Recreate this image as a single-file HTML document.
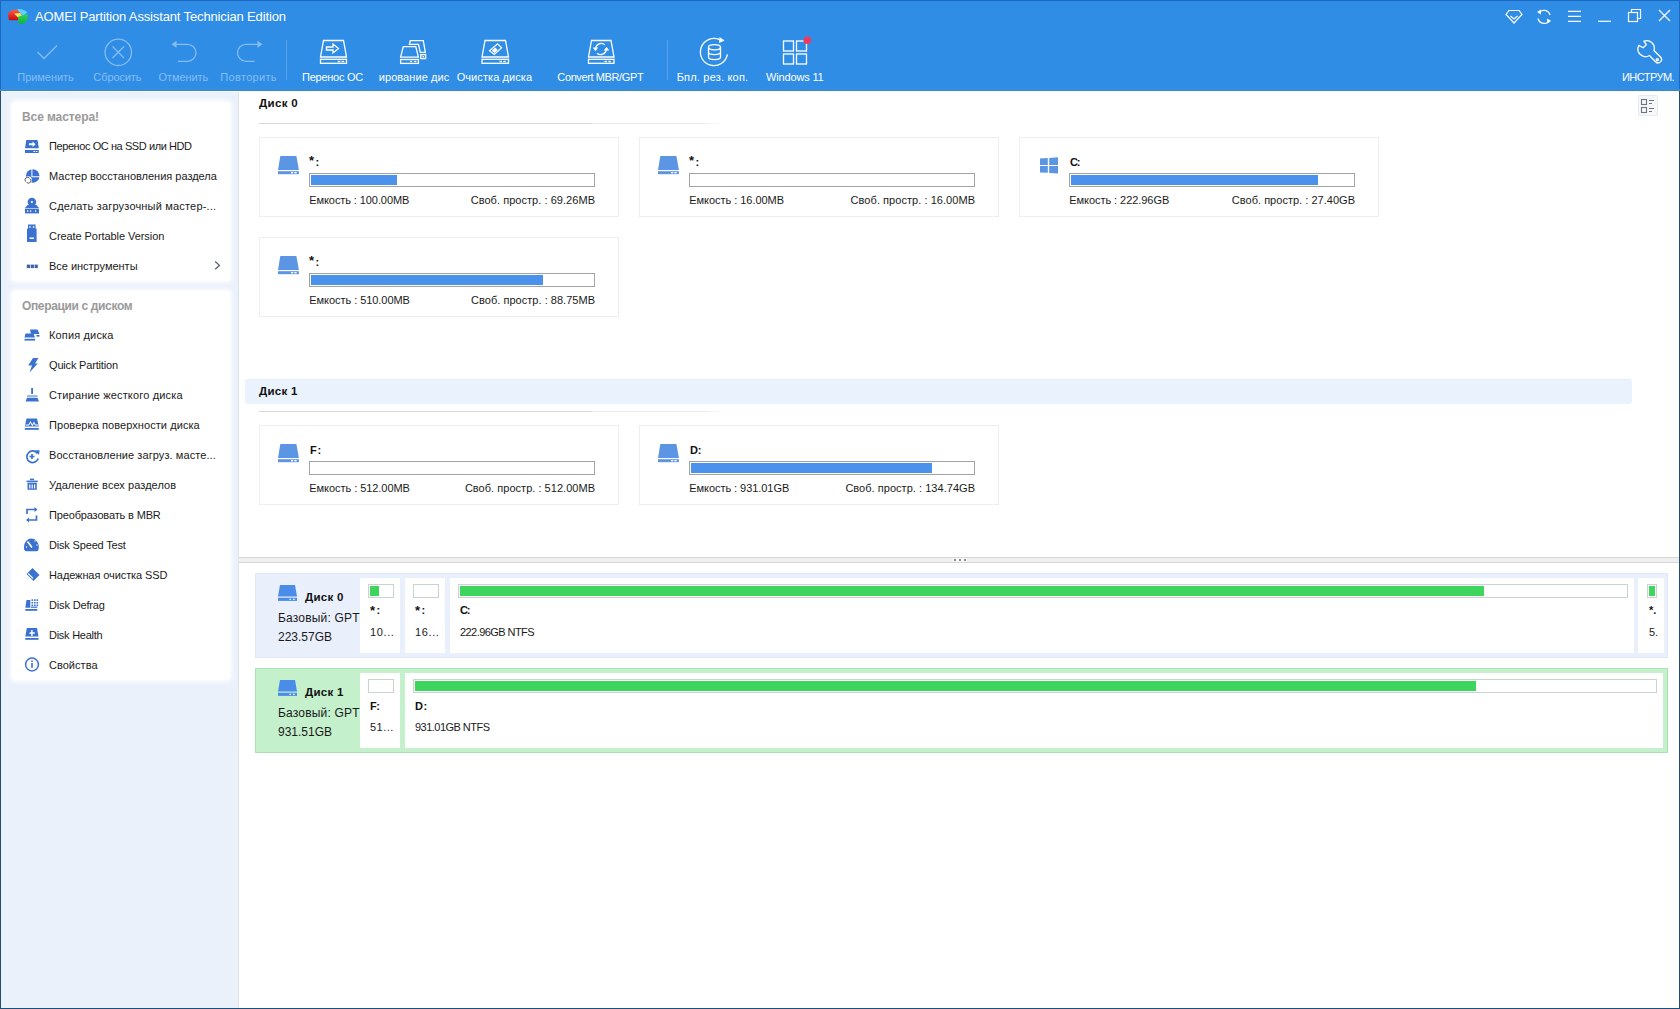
<!DOCTYPE html>
<html><head><meta charset="utf-8">
<style>
*{box-sizing:border-box;margin:0;padding:0}
html,body{width:1680px;height:1009px;overflow:hidden;background:#fff;font-family:"Liberation Sans",sans-serif;color:#1a1a1a}
.t{position:absolute;line-height:1;white-space:nowrap}
.r{position:absolute}
svg{position:absolute;overflow:visible}
</style></head><body>
<div class="r" style="left:0px;top:0px;width:1680px;height:90px;background:#2f8de6;"></div><div class="r" style="left:0px;top:0px;width:1680px;height:1px;background:#1c68c0;"></div><div class="r" style="left:0px;top:0px;width:1px;height:90px;background:#1c68c0;"></div><div class="r" style="left:1679px;top:0px;width:1px;height:90px;background:#1c68c0;"></div><div class="r" style="left:0px;top:89px;width:1680px;height:1px;background:#3a8ddc;"></div><svg style="left:8px;top:8px" width="21" height="17" viewBox="0 0 21 17">
<defs>
<linearGradient id="lr" x1="0" y1="0" x2="0" y2="1"><stop offset="0" stop-color="#ff5a4a"/><stop offset="1" stop-color="#c80a0a"/></linearGradient>
<linearGradient id="lgn" x1="0" y1="0" x2="0" y2="1"><stop offset="0" stop-color="#2fd35a"/><stop offset="1" stop-color="#12b03c"/></linearGradient>
</defs>
<path d="M9.5 1 Q15.5 0.5 19.5 4.5 L15 7.5 Q13 5.5 10 5.5 Z" fill="#5fd0ff"/>
<path d="M0.5 4.5 Q4 1.5 9 1.5 L13.5 6.5 L10.5 12 Q6 12.5 1 12 Q-0.5 8 0.5 4.5 Z" fill="url(#lr)"/>
<path d="M6 5.5 L12 5 L14.5 8 L10.5 10 Z" fill="#e6e860"/>
<path d="M10.5 8.5 L19.5 6 Q20.5 12 17 14.5 Q14 16.5 11 16 L10 11 Z" fill="url(#lgn)"/>
</svg><div class="t" style="left:35px;top:10.00px;font-size:13px;font-weight:400;color:#fff;letter-spacing:-0.14px;">AOMEI Partition Assistant Technician Edition</div><div class="t" style="left:45.5px;top:71.69px;font-size:11px;font-weight:400;color:#86bdf2;letter-spacing:-0.062px;transform:translateX(-50%)">Применить</div><div class="t" style="left:117.4px;top:71.69px;font-size:11px;font-weight:400;color:#86bdf2;letter-spacing:-0.1px;transform:translateX(-50%)">Сбросить</div><div class="t" style="left:183.3px;top:71.69px;font-size:11px;font-weight:400;color:#86bdf2;letter-spacing:-0.071px;transform:translateX(-50%)">Отменить</div><div class="t" style="left:248.6px;top:71.69px;font-size:11px;font-weight:400;color:#86bdf2;letter-spacing:0.312px;transform:translateX(-50%)">Повторить</div><div class="t" style="left:332.5px;top:71.69px;font-size:11px;font-weight:400;color:#fff;letter-spacing:-0.256px;transform:translateX(-50%)">Перенос ОС</div><div class="t" style="left:414px;top:71.69px;font-size:11px;font-weight:400;color:#fff;letter-spacing:0.073px;transform:translateX(-50%)">ирование дис</div><div class="t" style="left:494.4px;top:71.69px;font-size:11px;font-weight:400;color:#fff;letter-spacing:0.083px;transform:translateX(-50%)">Очистка диска</div><div class="t" style="left:600.3px;top:71.69px;font-size:11px;font-weight:400;color:#fff;letter-spacing:-0.386px;transform:translateX(-50%)">Convert MBR/GPT</div><div class="t" style="left:712.5px;top:71.69px;font-size:11px;font-weight:400;color:#fff;letter-spacing:0.2px;transform:translateX(-50%)">Бпл. рез. коп.</div><div class="t" style="left:794.8px;top:71.69px;font-size:11px;font-weight:400;color:#fff;letter-spacing:-0.156px;transform:translateX(-50%)">Windows 11</div><div class="t" style="left:1648px;top:71.69px;font-size:11px;font-weight:400;color:#fff;letter-spacing:-0.543px;transform:translateX(-50%)">ИНСТРУМ.</div><div class="r" style="left:286px;top:40px;width:1px;height:40px;background:#5aa3ea;"></div><div class="r" style="left:667px;top:40px;width:1px;height:40px;background:#5aa3ea;"></div><svg style="left:0px;top:0px" width="1680" height="90" viewBox="0 0 1680 90">
<g fill="none" stroke="#86bdf2" stroke-width="1.3">
 <path d="M37.5 52 L44 58.5 L57 45.5"/>
 <circle cx="118.3" cy="52.3" r="13.2"/>
 <path d="M112.5 46.5 L124 58 M124 46.5 L112.5 58"/>
 <path d="M174 44.3 H187.5 A8.5 8.5 0 0 1 187.5 61.3 H178"/>
 <path d="M260 44.3 H246 A8.5 8.5 0 0 0 246 61.3 H254.5"/>
</g>
<path d="M171.5 44.3 L176.5 40.8 L176.5 47.8 Z" fill="#86bdf2"/>
<path d="M262.5 44.3 L257.5 40.8 L257.5 47.8 Z" fill="#86bdf2"/>
<g fill="none" stroke="#fff" stroke-width="1.3">
 <path d="M323.5 40.5 H343.5 L346.5 57 H320.5 Z"/>
 <rect x="320.5" y="59.3" width="26" height="4"/>
 <path d="M326.5 47 H333 V44 L338.5 48.5 L333 53 V50 H326.5 Z"/>
 <path d="M410.3 40.6 H423.3 L425.3 52.4 H420.3 L418.5 44.3 H409.4 Z"/>
 <path d="M403.3 46.6 H415.8 L418.4 57.2 H400.6 Z"/>
 <rect x="400.6" y="59.5" width="17.8" height="3.9"/>
 <rect x="420.8" y="54.6" width="4.8" height="4"/>
 <path d="M485 40.5 H505.5 L508.5 57 H482 Z"/>
 <rect x="482" y="59.3" width="26.5" height="4"/>
 <path d="M497.6 43.8 L501.6 47.8 L494.3 54.5 L489.5 50.8 Z" stroke-width="1.2"/>
 <path d="M591.5 40.5 H611 L614 57 H588.5 Z"/>
 <rect x="588.5" y="59.3" width="25.5" height="4"/>
 <path d="M595.6 48.5 A5.6 5.6 0 0 1 604.8 44.8 M606.3 49.5 A5.6 5.6 0 0 1 597 53.2"/>
 <path d="M727.4 54.4 A13.6 13.6 0 1 1 719.5 39.6"/>
 <ellipse cx="714.5" cy="47.3" rx="6" ry="2.6"/>
 <path d="M708.5 47.3 V57 A6 2.6 0 0 0 720.5 57 V47.3 M708.5 52 A6 2.6 0 0 0 720.5 52"/>
 <rect x="783.5" y="41" width="10" height="10"/>
 <rect x="796.5" y="41" width="10" height="10"/>
 <rect x="783.5" y="54" width="10" height="10"/>
 <rect x="796.5" y="54" width="10" height="10"/>
 <path d="M1638.8 45.5 A7.6 7.6 0 0 0 1649.5 55.5 L1655.5 61.8 A3.4 3.4 0 0 0 1660.5 57 L1654 50.5 A7.6 7.6 0 0 0 1644 41.2 L1646.3 44.6 L1643.2 47.8 Z"/>
 <circle cx="1657.3" cy="59.8" r="1.1"/>
</g>
<path d="M592.8 47.6 L598.2 47.6 L595.5 51.2 Z M603.8 50.4 L609.2 50.4 L606.5 46.8 Z M491.8 50.6 L495.3 47.4 L497.8 49.9 L494.3 53.1 Z" fill="#fff"/>
<path d="M719.5 37 L724.5 40.6 L719 43 Z" fill="#fff"/>
<g fill="#fff"><rect x="337.8" y="60.8" width="2.5" height="1.3"/><rect x="341.6" y="60.8" width="2.5" height="1.3"/>
<rect x="410.2" y="60.8" width="2" height="1.3"/><rect x="414.3" y="60.8" width="2" height="1.3"/>
<rect x="499.5" y="60.8" width="2.5" height="1.3"/><rect x="503.3" y="60.8" width="2.5" height="1.3"/>
<rect x="604.5" y="60.8" width="2.5" height="1.3"/><rect x="608.3" y="60.8" width="2.5" height="1.3"/>
<rect x="422.5" y="56" width="1.5" height="1.3"/></g>
<circle cx="807.3" cy="40.3" r="3.8" fill="#f0395a"/>
<g fill="none" stroke="#fff" stroke-width="1.2">
 <path d="M1509 10.5 H1519 L1522 14.5 L1514 23 L1506 14.5 Z M1510.5 16 L1514 19 L1517.5 16"/>
 <path d="M1538.5 13 A6.5 6.5 0 0 1 1550 15 M1550 20 A6.5 6.5 0 0 1 1538 18.5"/>
 <path d="M1568 11.3 H1581 M1568 16.3 H1581 M1568 21.3 H1581"/>
 <path d="M1598 21.3 H1611"/>
 <rect x="1628.5" y="12.5" width="9" height="9"/>
 <path d="M1631.5 12.5 V9.5 H1640.5 V18.5 H1637.5"/>
 <path d="M1659 10 L1670 21 M1670 10 L1659 21"/>
</g>
<path d="M1537 12 L1541 9.5 L1541 14.5 Z M1551 21 L1547 23.5 L1547 18.5 Z" fill="#fff"/>
</svg><div class="r" style="left:0px;top:90px;width:238px;height:919px;background:#ebf1fb;"></div><div class="r" style="left:0px;top:90px;width:1px;height:919px;background:#264e72;"></div><div class="r" style="left:238px;top:90px;width:1px;height:919px;background:#dfe4ea;"></div><div class="r" style="left:12px;top:102px;width:218px;height:179px;background:#fff;border-radius:3px;box-shadow:0 0 4px 2px rgba(255,255,255,0.85)"></div><div class="r" style="left:12px;top:291px;width:218px;height:389px;background:#fff;border-radius:3px;box-shadow:0 0 4px 2px rgba(255,255,255,0.85)"></div><div class="t" style="left:22px;top:110.84px;font-size:12px;font-weight:700;color:#9a9a9a;letter-spacing:-0.091px;">Все мастера!</div><div class="t" style="left:22px;top:299.84px;font-size:12px;font-weight:700;color:#9a9a9a;letter-spacing:-0.356px;">Операции с диском</div><div class="t" style="left:49px;top:140.69px;font-size:11px;font-weight:400;color:#1a1a1a;letter-spacing:-0.421px;">Перенос ОС на SSD или HDD</div><div class="t" style="left:49px;top:170.69px;font-size:11px;font-weight:400;color:#1a1a1a;letter-spacing:-0.011px;">Мастер восстановления раздела</div><div class="t" style="left:49px;top:200.69px;font-size:11px;font-weight:400;color:#1a1a1a;letter-spacing:0.183px;">Сделать загрузочный мастер-...</div><div class="t" style="left:49px;top:230.69px;font-size:11px;font-weight:400;color:#1a1a1a;letter-spacing:-0.068px;">Create Portable Version</div><div class="t" style="left:49px;top:260.69px;font-size:11px;font-weight:400;color:#1a1a1a;letter-spacing:-0.021px;">Все инструменты</div><div class="t" style="left:49px;top:329.69px;font-size:11px;font-weight:400;color:#1a1a1a;letter-spacing:0.15px;">Копия диска</div><div class="t" style="left:49px;top:359.69px;font-size:11px;font-weight:400;color:#1a1a1a;letter-spacing:-0.179px;">Quick Partition</div><div class="t" style="left:49px;top:389.69px;font-size:11px;font-weight:400;color:#1a1a1a;letter-spacing:0.159px;">Стирание жесткого диска</div><div class="t" style="left:49px;top:419.69px;font-size:11px;font-weight:400;color:#1a1a1a;letter-spacing:0.072px;">Проверка поверхности диска</div><div class="t" style="left:49px;top:449.69px;font-size:11px;font-weight:400;color:#1a1a1a;letter-spacing:0.077px;">Восстановление загруз. масте...</div><div class="t" style="left:49px;top:479.69px;font-size:11px;font-weight:400;color:#1a1a1a;letter-spacing:0.057px;">Удаление всех разделов</div><div class="t" style="left:49px;top:509.69px;font-size:11px;font-weight:400;color:#1a1a1a;letter-spacing:-0.15px;">Преобразовать в MBR</div><div class="t" style="left:49px;top:539.69px;font-size:11px;font-weight:400;color:#1a1a1a;letter-spacing:-0.171px;">Disk Speed Test</div><div class="t" style="left:49px;top:569.69px;font-size:11px;font-weight:400;color:#1a1a1a;letter-spacing:-0.089px;">Надежная очистка SSD</div><div class="t" style="left:49px;top:599.69px;font-size:11px;font-weight:400;color:#1a1a1a;letter-spacing:-0.16px;">Disk Defrag</div><div class="t" style="left:49px;top:629.69px;font-size:11px;font-weight:400;color:#1a1a1a;letter-spacing:-0.26px;">Disk Health</div><div class="t" style="left:49px;top:659.69px;font-size:11px;font-weight:400;color:#1a1a1a;letter-spacing:0.029px;">Свойства</div><svg style="left:0px;top:0px" width="240" height="700" viewBox="0 0 240 700">
<g fill="#3b72cf">
 <!-- 1 migrate -->
 <path d="M26.3 140 H37.5 L38.8 148.2 H25 Z"/>
 <rect x="25" y="150" width="13.8" height="3"/>
 <!-- 2 pie -->
 <circle cx="32.7" cy="176" r="6.8"/>
 <!-- 3 boot -->
 <circle cx="31.9" cy="202" r="4.3"/>
 <path d="M27.5 205 H36.5 L39 208 H25 Z"/>
 <rect x="25" y="208.6" width="14" height="4.8"/>
 <!-- 4 usb -->
 <rect x="27" y="228.6" width="9.6" height="13.4"/>
 <rect x="28" y="224.5" width="7.6" height="4.6"/>
 <!-- 5 dots -->
 <g fill="#3f62a5"><rect x="26.8" y="264.6" width="3.2" height="3.5"/><rect x="30.7" y="264.6" width="3.2" height="3.5"/><rect x="34.6" y="264.6" width="3.2" height="3.5"/></g>
 <!-- 6 copy -->
 <path d="M30 329.5 H37.5 L39.5 334 H31 Z"/>
 <path d="M25.5 333.5 H33.5 L35 337.5 H24.5 Z"/>
 <rect x="24.5" y="338.8" width="10.5" height="1.8"/>
 <rect x="36.5" y="335" width="3" height="1.6"/>
 <!-- 7 bolt -->
 <path d="M33 358 L38.5 358 L35 363.5 L37.8 363.5 L29.5 372.5 L32 365.5 L28.2 365.5 Z"/>
 <!-- 8 broom -->
 <rect x="31.2" y="388" width="1.8" height="6"/>
 <path d="M27 395.5 H37.5 L37.5 396.5 H27 Z"/>
 <path d="M27 397.8 H37.5 L39 401.5 H25.5 Z"/>
 <!-- 9 surface -->
 <path d="M26.5 418.5 H37 L38.8 426.5 H24.8 Z"/>
 <rect x="24.8" y="428" width="14" height="1.8"/>
 <!-- 11 trash -->
 <rect x="30" y="478.6" width="4" height="1.6"/>
 <rect x="26.5" y="480.6" width="11.2" height="1.6"/>
 <path d="M27.5 482.8 H36.8 V489.8 H27.5 Z"/>
 <!-- 13 speedometer -->
 <path d="M24 547 A7.4 8.5 0 0 1 38.8 547 L38.6 549.5 Q38.2 551.2 36.5 551.2 H26.3 Q24.6 551.2 24.2 549.5 Z"/>
 <!-- 14 eraser -->
 <path d="M32.5 568 L39.5 575 L33.5 581 L26.5 574 Z"/>
 <!-- 15 defrag -->
 <path d="M26.5 600 H30.3 V607.8 H25.3 Z"/>
 <rect x="25.3" y="609" width="12" height="1.8"/>
 <g>
  <rect x="31.5" y="599.3" width="1.6" height="1.6"/><rect x="34" y="599.3" width="1.6" height="1.6"/><rect x="36.5" y="599.3" width="1.6" height="1.6"/>
  <rect x="31.5" y="601.9" width="1.6" height="1.6"/><rect x="34" y="601.9" width="1.6" height="1.6"/><rect x="36.5" y="601.9" width="1.6" height="1.6"/>
  <rect x="31.5" y="604.5" width="1.6" height="1.6"/><rect x="34" y="604.5" width="1.6" height="1.6"/><rect x="36.5" y="604.5" width="1.6" height="1.6"/>
  <rect x="31" y="606.6" width="6.3" height="1.2"/>
 </g>
 <!-- 16 health -->
 <path d="M26.8 628 H37 L38.5 636.5 H25.3 Z"/>
 <rect x="25.3" y="638" width="13.2" height="1.8"/>
</g>
<g fill="#fff">
 <path d="M29 143.2 H32.6 V141.5 L35.6 144.3 L32.6 147 V145.3 H29 Z"/>
 <rect x="33.5" y="151" width="1.5" height="1"/><rect x="35.8" y="151" width="1.5" height="1"/>
 <path d="M32.4 169 V176.3 H40 V177.3 H31.4 V169 Z"/>
 <circle cx="31.9" cy="202" r="1.1"/>
 <rect x="27" y="210.3" width="1.2" height="1.5"/><rect x="30" y="210.3" width="1.2" height="1.5"/><rect x="35" y="210.3" width="1.2" height="1.5"/>
 <rect x="29.2" y="226.2" width="1.5" height="1.5"/><rect x="32.8" y="226.2" width="1.5" height="1.5"/>
 <rect x="29.5" y="237.5" width="4.5" height="1.4"/>
 <path d="M25.5 424.5 L28.5 424.5 L30.5 421 L32.3 424.5 L34 421.5 L35.5 424.5 L38.5 424.5 L38.5 425.5 L35 425.5 L34 423.5 L32.3 426.5 L30.5 423 L29 425.5 L25.5 425.5 Z"/>
 <rect x="29.2" y="484.5" width="1.2" height="4"/><rect x="31.6" y="484.5" width="1.2" height="4"/><rect x="34" y="484.5" width="1.2" height="4"/>
 <circle cx="26.5" cy="547" r="0.7"/><circle cx="35" cy="541" r="0.7"/><circle cx="37" cy="545" r="0.7"/>
 <path d="M30 632.3 H31.2 V630 H32.6 V632.3 H34.8 V633.7 H32.6 V636 H31.2 V633.7 H29 Z"/>
</g>
<g fill="none" stroke="#3b72cf" stroke-width="1.7">
 <path d="M37.5 453.5 A5.8 5.8 0 1 0 38.2 458.5"/>
 <path d="M29.5 456.5 H34.5 M32 454 V459"/>
 <path d="M27 514 V509.5 H36.5 M36.5 515.5 V520 H27"/>
 <circle cx="32" cy="664.5" r="6.4" stroke-width="1.5"/>
</g>
<g fill="#3b72cf">
 <path d="M35 450.2 L39.6 450.2 L39 455 Z"/>
 <path d="M34.5 507 L37.5 509.5 L34.5 512 Z M29 517.5 L26 520 L29 522.5 Z"/>
 <rect x="31.2" y="663" width="1.6" height="4.8"/><rect x="31.2" y="660.5" width="1.6" height="1.5"/>
</g>
<g fill="none" stroke="#fff" stroke-width="1.2">

 <path d="M27.5 541.5 L32 547.5" stroke-width="1.6"/>
 <path d="M28 573.3 L33 578.3"/>
</g>
<circle cx="28" cy="180.2" r="3.9" fill="#fff"/>
<path d="M25.6 181.5 A2.5 2.5 0 0 1 29.5 178.2" fill="none" stroke="#5a5a5a" stroke-width="1"/>
<path d="M30.4 179 A2.5 2.5 0 0 1 26.5 182.2" fill="none" stroke="#5a5a5a" stroke-width="1"/>
</svg><svg style="left:0px;top:0px" width="240" height="700" viewBox="0 0 240 700"><path d="M215.2 261.5 L219.4 265.4 L215.2 269.3" fill="none" stroke="#4d5b6e" stroke-width="1.2"/></svg><div class="r" style="left:239px;top:90px;width:1440px;height:919px;background:#fff;"></div><div class="r" style="left:1679px;top:90px;width:1px;height:919px;background:#264e72;"></div><div class="r" style="left:0px;top:1008px;width:1680px;height:1px;background:#1a5080;"></div><div class="r" style="left:0px;top:90px;width:1680px;height:1px;background:#4a86b2;"></div><div class="r" style="left:1px;top:91px;width:1678px;height:1px;background:#eafafb;"></div><div class="t" style="left:259px;top:98.27px;font-size:11.5px;font-weight:700;color:#111;letter-spacing:0.34px;">Диск 0</div><div class="r" style="left:259px;top:123px;width:333px;height:1px;background:#d9d9d9;"></div><div class="r" style="left:592px;top:123px;width:114px;height:1px;background:#eaeaea;"></div><div class="r" style="left:706px;top:123px;width:14px;height:1px;background:#f5f5f5;"></div><div class="r" style="left:259px;top:411px;width:333px;height:1px;background:#d9d9d9;"></div><div class="r" style="left:592px;top:411px;width:114px;height:1px;background:#eaeaea;"></div><div class="r" style="left:706px;top:411px;width:14px;height:1px;background:#f5f5f5;"></div><div class="r" style="left:259px;top:137px;width:360px;height:80px;background:#fff;border:1px solid #eeeeee"></div><svg style="left:278px;top:156px" width="22" height="19" viewBox="0 0 22 19"><path d="M2.3 0 H18.4 L20.9 14 H0 Z" fill="#5b95e3"/><rect x="0" y="15.2" width="20.9" height="3" fill="#5b95e3"/><rect x="13" y="16" width="2.2" height="1.4" fill="#fff"/><rect x="16.4" y="16" width="2.2" height="1.4" fill="#fff"/></svg><div class="t" style="left:309px;top:154.00px;font-size:13px;font-weight:700;color:#111;letter-spacing:0px;">*</div><div class="t" style="left:315.5px;top:156.69px;font-size:11px;font-weight:700;color:#111;letter-spacing:0px;">:</div><div class="r" style="left:309px;top:173px;width:286px;height:14px;background:#fff;border:1px solid #a3a3a3"></div><div class="r" style="left:311px;top:175px;width:86px;height:10px;background:#4a92ec;"></div><div class="t" style="left:309.3px;top:194.69px;font-size:11px;font-weight:400;color:#1a1a1a;letter-spacing:-0.088px;">Емкость : 100.00MB</div><div class="t" style="right:1085px;top:194.69px;font-size:11px;font-weight:400;color:#1a1a1a;letter-spacing:0.045px;margin-right:-0.045px">Своб. простр. : 69.26MB</div><div class="r" style="left:639px;top:137px;width:360px;height:80px;background:#fff;border:1px solid #eeeeee"></div><svg style="left:658px;top:156px" width="22" height="19" viewBox="0 0 22 19"><path d="M2.3 0 H18.4 L20.9 14 H0 Z" fill="#5b95e3"/><rect x="0" y="15.2" width="20.9" height="3" fill="#5b95e3"/><rect x="13" y="16" width="2.2" height="1.4" fill="#fff"/><rect x="16.4" y="16" width="2.2" height="1.4" fill="#fff"/></svg><div class="t" style="left:689px;top:154.00px;font-size:13px;font-weight:700;color:#111;letter-spacing:0px;">*</div><div class="t" style="left:695.5px;top:156.69px;font-size:11px;font-weight:700;color:#111;letter-spacing:0px;">:</div><div class="r" style="left:689px;top:173px;width:286px;height:14px;background:#fff;border:1px solid #a3a3a3"></div><div class="t" style="left:689.3px;top:194.69px;font-size:11px;font-weight:400;color:#1a1a1a;letter-spacing:-0.044px;">Емкость : 16.00MB</div><div class="t" style="right:705px;top:194.69px;font-size:11px;font-weight:400;color:#1a1a1a;letter-spacing:0.05px;margin-right:-0.05px">Своб. простр. : 16.00MB</div><div class="r" style="left:1019px;top:137px;width:360px;height:80px;background:#fff;border:1px solid #eeeeee"></div><svg style="left:1040px;top:157px" width="19" height="19" viewBox="0 0 19 19"><path d="M0 1.5 L7.8 1 V7.9 H0 Z M9.2 0.9 L18 0.2 V7.9 H9.2 Z M0 9 H7.8 V15.8 L0 15.5 Z M9.2 9 H18 V16.6 L9.2 15.9 Z" fill="#5b95e3"/></svg><div class="t" style="left:1070px;top:156.69px;font-size:11px;font-weight:700;color:#111;letter-spacing:-1.3px;">C:</div><div class="r" style="left:1069px;top:173px;width:286px;height:14px;background:#fff;border:1px solid #a3a3a3"></div><div class="r" style="left:1071px;top:175px;width:247px;height:10px;background:#4a92ec;"></div><div class="t" style="left:1069.3px;top:194.69px;font-size:11px;font-weight:400;color:#1a1a1a;letter-spacing:-0.059px;">Емкость : 222.96GB</div><div class="t" style="right:325px;top:194.69px;font-size:11px;font-weight:400;color:#1a1a1a;letter-spacing:0.023px;margin-right:-0.023px">Своб. простр. : 27.40GB</div><div class="r" style="left:259px;top:237px;width:360px;height:80px;background:#fff;border:1px solid #eeeeee"></div><svg style="left:278px;top:256px" width="22" height="19" viewBox="0 0 22 19"><path d="M2.3 0 H18.4 L20.9 14 H0 Z" fill="#5b95e3"/><rect x="0" y="15.2" width="20.9" height="3" fill="#5b95e3"/><rect x="13" y="16" width="2.2" height="1.4" fill="#fff"/><rect x="16.4" y="16" width="2.2" height="1.4" fill="#fff"/></svg><div class="t" style="left:309px;top:254.00px;font-size:13px;font-weight:700;color:#111;letter-spacing:0px;">*</div><div class="t" style="left:315.5px;top:256.69px;font-size:11px;font-weight:700;color:#111;letter-spacing:0px;">:</div><div class="r" style="left:309px;top:273px;width:286px;height:14px;background:#fff;border:1px solid #a3a3a3"></div><div class="r" style="left:311px;top:275px;width:232px;height:10px;background:#4a92ec;"></div><div class="t" style="left:309.3px;top:294.69px;font-size:11px;font-weight:400;color:#1a1a1a;letter-spacing:-0.053px;">Емкость : 510.00MB</div><div class="t" style="right:1085px;top:294.69px;font-size:11px;font-weight:400;color:#1a1a1a;letter-spacing:0.027px;margin-right:-0.027px">Своб. простр. : 88.75MB</div><div class="r" style="left:245px;top:379px;width:1387px;height:25px;background:#eaf3fd;border-radius:3px;border-top:1px solid #e9eef3"></div><div class="t" style="left:259px;top:386.27px;font-size:11.5px;font-weight:700;color:#111;letter-spacing:0.3px;">Диск 1</div><div class="r" style="left:259px;top:425px;width:360px;height:80px;background:#fff;border:1px solid #eeeeee"></div><svg style="left:278px;top:444px" width="22" height="19" viewBox="0 0 22 19"><path d="M2.3 0 H18.4 L20.9 14 H0 Z" fill="#5b95e3"/><rect x="0" y="15.2" width="20.9" height="3" fill="#5b95e3"/><rect x="13" y="16" width="2.2" height="1.4" fill="#fff"/><rect x="16.4" y="16" width="2.2" height="1.4" fill="#fff"/></svg><div class="t" style="left:310px;top:444.69px;font-size:11px;font-weight:700;color:#111;letter-spacing:0.7px;">F:</div><div class="r" style="left:309px;top:461px;width:286px;height:14px;background:#fff;border:1px solid #a3a3a3"></div><div class="t" style="left:309.3px;top:482.69px;font-size:11px;font-weight:400;color:#1a1a1a;letter-spacing:-0.053px;">Емкость : 512.00MB</div><div class="t" style="right:1085px;top:482.69px;font-size:11px;font-weight:400;color:#1a1a1a;letter-spacing:0.03px;margin-right:-0.03px">Своб. простр. : 512.00MB</div><div class="r" style="left:639px;top:425px;width:360px;height:80px;background:#fff;border:1px solid #eeeeee"></div><svg style="left:658px;top:444px" width="22" height="19" viewBox="0 0 22 19"><path d="M2.3 0 H18.4 L20.9 14 H0 Z" fill="#5b95e3"/><rect x="0" y="15.2" width="20.9" height="3" fill="#5b95e3"/><rect x="13" y="16" width="2.2" height="1.4" fill="#fff"/><rect x="16.4" y="16" width="2.2" height="1.4" fill="#fff"/></svg><div class="t" style="left:690px;top:444.69px;font-size:11px;font-weight:700;color:#111;letter-spacing:-0.3px;">D:</div><div class="r" style="left:689px;top:461px;width:286px;height:14px;background:#fff;border:1px solid #a3a3a3"></div><div class="r" style="left:691px;top:463px;width:241px;height:10px;background:#4a92ec;"></div><div class="t" style="left:689.3px;top:482.69px;font-size:11px;font-weight:400;color:#1a1a1a;letter-spacing:-0.059px;">Емкость : 931.01GB</div><div class="t" style="right:705px;top:482.69px;font-size:11px;font-weight:400;color:#1a1a1a;letter-spacing:0.035px;margin-right:-0.035px">Своб. простр. : 134.74GB</div><div class="r" style="left:1638px;top:95px;width:20px;height:21px;background:#f6f8fb;border:1px solid #e6e9ee;border-radius:2px"></div><svg style="left:0px;top:0px" width="1680" height="130" viewBox="0 0 1680 130"><g fill="none" stroke="#6b7580" stroke-width="1.1"><rect x="1641.5" y="99.5" width="5" height="5"/><rect x="1641.5" y="107.5" width="5" height="5"/></g><g fill="#6b7580"><rect x="1649" y="100" width="5" height="1"/><rect x="1649" y="103" width="3" height="1"/><rect x="1649" y="108" width="5" height="1"/><rect x="1649" y="111" width="3" height="1"/></g></svg><div class="r" style="left:239px;top:557px;width:1440px;height:6px;background:#efefef;"></div><div class="r" style="left:239px;top:557px;width:1440px;height:1px;background:#d6d6d6;"></div><div class="r" style="left:239px;top:562px;width:1440px;height:1px;background:#d6d6d6;"></div><div class="r" style="left:952px;top:558px;width:15px;height:4px;background:#f8f8f8;"></div><svg style="left:0px;top:0px" width="1680" height="570" viewBox="0 0 1680 570"><g fill="#8c8c8c"><rect x="954" y="559" width="2" height="2"/><rect x="959" y="559" width="2" height="2"/><rect x="964" y="559" width="2" height="2"/></g></svg><div class="r" style="left:255px;top:573px;width:1413px;height:85px;background:#e9effb;border:1px solid #e0e7f5"></div><svg style="left:278px;top:585px" width="19" height="16" viewBox="0 0 19 16"><path d="M2 0 H17 L19 11.6 H0 Z" fill="#4a8ce8"/><rect x="0" y="12.7" width="19" height="3.2" fill="#4a8ce8"/><rect x="11.3" y="13.7" width="1.8" height="1.2" fill="#dff"/><rect x="15" y="13.7" width="1.8" height="1.2" fill="#dff"/></svg><div class="t" style="left:305px;top:591.77px;font-size:11.5px;font-weight:700;color:#111;letter-spacing:0.26px;">Диск 0</div><div class="t" style="left:278px;top:612.34px;font-size:12px;font-weight:400;color:#1a1a1a;letter-spacing:0.182px;">Базовый: GPT</div><div class="t" style="left:278px;top:630.54px;font-size:12px;font-weight:400;color:#1a1a1a;letter-spacing:0px;">223.57GB</div><div class="r" style="left:360px;top:578px;width:40px;height:75px;background:#fff;"></div><div class="r" style="left:368px;top:584px;width:26px;height:14px;background:#fff;border:1px solid #c8d5cd"></div><div class="r" style="left:370px;top:586px;width:9px;height:10px;background:#3dd55e;"></div><div class="t" style="left:370px;top:603.50px;font-size:13px;font-weight:700;color:#111;letter-spacing:0px;">*</div><div class="t" style="left:376.5px;top:605.19px;font-size:11px;font-weight:700;color:#111;letter-spacing:0px;">:</div><div class="t" style="left:370px;top:626.69px;font-size:11px;font-weight:400;color:#1a1a1a;letter-spacing:0.625px;">10...</div><div class="r" style="left:405px;top:578px;width:40px;height:75px;background:#fff;"></div><div class="r" style="left:413px;top:584px;width:26px;height:14px;background:#fff;border:1px solid #c8d5cd"></div><div class="t" style="left:415px;top:603.50px;font-size:13px;font-weight:700;color:#111;letter-spacing:0px;">*</div><div class="t" style="left:421.5px;top:605.19px;font-size:11px;font-weight:700;color:#111;letter-spacing:0px;">:</div><div class="t" style="left:415px;top:626.69px;font-size:11px;font-weight:400;color:#1a1a1a;letter-spacing:0.625px;">16...</div><div class="r" style="left:450px;top:578px;width:1184px;height:75px;background:#fff;"></div><div class="r" style="left:458px;top:584px;width:1170px;height:14px;background:#fff;border:1px solid #c8d5cd"></div><div class="r" style="left:460px;top:586px;width:1024px;height:10px;background:#3dd55e;"></div><div class="t" style="left:460px;top:605.19px;font-size:11px;font-weight:700;color:#111;letter-spacing:-1.3px;">C:</div><div class="t" style="left:460px;top:626.69px;font-size:11px;font-weight:400;color:#1a1a1a;letter-spacing:-0.558px;">222.96GB NTFS</div><div class="r" style="left:1638px;top:578px;width:26px;height:75px;background:#fff;"></div><div class="r" style="left:1647px;top:584px;width:10px;height:14px;background:#fff;border:1px solid #c8d5cd"></div><div class="r" style="left:1649px;top:586px;width:6px;height:10px;background:#3dd55e;"></div><div class="t" style="left:1649px;top:604.69px;font-size:11px;font-weight:700;color:#111;letter-spacing:0px;">*.</div><div class="t" style="left:1649px;top:626.69px;font-size:11px;font-weight:400;color:#1a1a1a;letter-spacing:0px;">5.</div><div class="r" style="left:255px;top:668px;width:1413px;height:85px;background:#c4f0cc;border:1px solid #a9e3b5"></div><svg style="left:278px;top:680px" width="19" height="16" viewBox="0 0 19 16"><path d="M2 0 H17 L19 11.6 H0 Z" fill="#4a8ce8"/><rect x="0" y="12.7" width="19" height="3.2" fill="#4a8ce8"/><rect x="11.3" y="13.7" width="1.8" height="1.2" fill="#dff"/><rect x="15" y="13.7" width="1.8" height="1.2" fill="#dff"/></svg><div class="t" style="left:305px;top:686.77px;font-size:11.5px;font-weight:700;color:#111;letter-spacing:0.26px;">Диск 1</div><div class="t" style="left:278px;top:707.34px;font-size:12px;font-weight:400;color:#1a1a1a;letter-spacing:0.182px;">Базовый: GPT</div><div class="t" style="left:278px;top:725.54px;font-size:12px;font-weight:400;color:#1a1a1a;letter-spacing:0px;">931.51GB</div><div class="r" style="left:360px;top:673px;width:40px;height:75px;background:#fff;"></div><div class="r" style="left:368px;top:679px;width:26px;height:14px;background:#fff;border:1px solid #c8d5cd"></div><div class="t" style="left:370px;top:700.69px;font-size:11px;font-weight:700;color:#111;letter-spacing:-0.5px;">F:</div><div class="t" style="left:370px;top:721.69px;font-size:11px;font-weight:400;color:#1a1a1a;letter-spacing:0.5px;">51...</div><div class="r" style="left:405px;top:673px;width:1258px;height:75px;background:#fff;"></div><div class="r" style="left:413px;top:679px;width:1244px;height:14px;background:#fff;border:1px solid #c8d5cd"></div><div class="r" style="left:415px;top:681px;width:1061px;height:10px;background:#3dd55e;"></div><div class="t" style="left:415px;top:700.69px;font-size:11px;font-weight:700;color:#111;letter-spacing:0.5px;">D:</div><div class="t" style="left:415px;top:721.69px;font-size:11px;font-weight:400;color:#1a1a1a;letter-spacing:-0.525px;">931.01GB NTFS</div>
</body></html>
